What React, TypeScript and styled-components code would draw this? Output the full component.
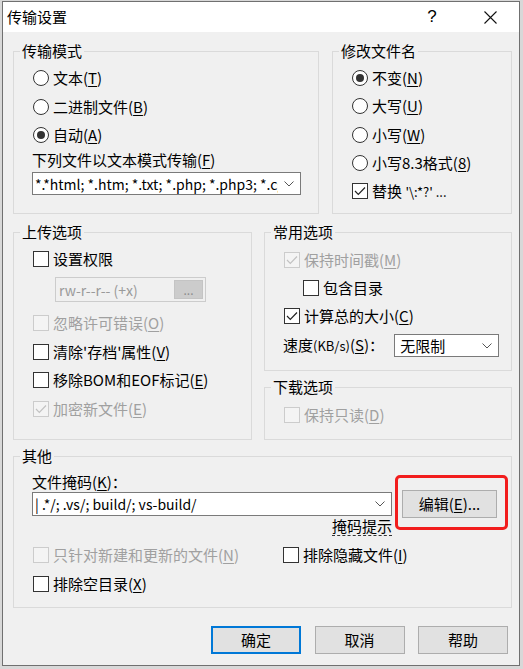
import React from "react";
import styled, { createGlobalStyle } from "styled-components";

const GlobalStyle = createGlobalStyle`
  html, body { margin: 0; padding: 0; }
  body {
    background: #d8d8d8;
    font-family: "Noto Sans CJK SC", "Noto Sans", sans-serif;
    font-size: 15px;
    color: #000;
  }
  * { box-sizing: border-box; }
`;

const Desktop = styled.div`
  width: 523px;
  height: 669px;
  padding: 1px 0 0 2px;
  overflow: hidden;
  background: #d8d8d8;
`;

const Window = styled.div`
  width: 518px;
  height: 665px;
  border: 1px solid #707070;
  background: #f0f0f0;
  display: flex;
  flex-direction: column;
`;

const TitleBar = styled.div`
  height: 30px;
  flex: none;
  background: #fff;
  display: flex;
  align-items: center;
  padding: 0 6px 0 4px;
`;

const Title = styled.div`
  flex: 1;
  font-size: 15px;
  line-height: 20px;
`;

const TitleButton = styled.div<{ $w: number }>`
  width: ${(p) => p.$w}px;
  height: 30px;
  display: flex;
  align-items: center;
  justify-content: center;
  font-family: "Liberation Sans", sans-serif;
  font-size: 17px;
`;

const Spacer = styled.div<{ $w: number }>`
  width: ${(p) => p.$w}px;
`;

const Body = styled.div`
  flex: 1;
  display: flex;
  flex-direction: column;
  padding: 9px 7px 11px 10px;
`;

const Row = styled.div<{ $h: number; $mt: number; $gap: number }>`
  display: flex;
  height: ${(p) => p.$h}px;
  margin-top: ${(p) => p.$mt}px;
  gap: ${(p) => p.$gap}px;
`;

const Column = styled.div<{ $w: number; $gap: number }>`
  display: flex;
  flex-direction: column;
  width: ${(p) => p.$w}px;
  gap: ${(p) => p.$gap}px;
`;

const Group = styled.fieldset<{ $w?: number; $h: number }>`
  margin: 0;
  padding: 0;
  min-width: 0;
  width: ${(p) => (p.$w ? `${p.$w}px` : "100%")};
  height: ${(p) => p.$h}px;
  border: 1px solid #dadada;
  flex: none;
`;

const Legend = styled.legend`
  margin-left: 6px;
  padding: 0 2px;
  line-height: 20px;
  font-size: 15px;
`;

const GroupBody = styled.div<{ $pt: number; $pl?: number }>`
  display: flex;
  flex-direction: column;
  align-items: flex-start;
  padding: ${(p) => p.$pt}px 0 0 ${(p) => p.$pl ?? 18}px;
`;

const Option = styled.div<{ $h: number; $indent?: number; $disabled?: boolean }>`
  display: flex;
  align-items: center;
  gap: 4px;
  height: ${(p) => p.$h}px;
  padding-left: ${(p) => 1 + (p.$indent ?? 0)}px;
  color: ${(p) => (p.$disabled ? "#a0a0a0" : "#000")};
  white-space: nowrap;
  line-height: 20px;
`;

const RadioCircle = styled.span<{ $on?: boolean }>`
  width: 16px;
  height: 16px;
  flex: none;
  border-radius: 50%;
  border: 1px solid #333;
  background: #fff;
  display: flex;
  align-items: center;
  justify-content: center;
  &::after {
    content: "";
    width: 8px;
    height: 8px;
    border-radius: 50%;
    background: #333;
    display: ${(p) => (p.$on ? "block" : "none")};
  }
`;

const CheckBox = styled.span<{ $disabled?: boolean }>`
  width: 16px;
  height: 16px;
  flex: none;
  border: 1px solid ${(p) => (p.$disabled ? "#cccccc" : "#333")};
  background: ${(p) => (p.$disabled ? "#f4f4f4" : "#fff")};
  display: flex;
  align-items: center;
  justify-content: center;
`;

const U = styled.span`
  text-decoration: underline;
  text-underline-offset: 2px;
`;

const Small = styled.span`
  font-size: 13px;
`;

const PlainLabel = styled.div<{ $h: number }>`
  height: ${(p) => p.$h}px;
  line-height: ${(p) => p.$h}px;
  white-space: nowrap;
`;

const Combo = styled.div<{ $w: number; $h: number; $mt?: number; $ml?: number }>`
  width: ${(p) => p.$w}px;
  height: ${(p) => p.$h}px;
  margin-top: ${(p) => p.$mt ?? 0}px;
  margin-left: ${(p) => p.$ml ?? 0}px;
  background: #fff;
  border: 1px solid #7a7a7a;
  display: flex;
  align-items: center;
  padding-left: 2px;
  flex: none;
`;

const ComboText = styled.span<{ $size?: number }>`
  flex: 1;
  overflow: hidden;
  white-space: nowrap;
  font-size: ${(p) => p.$size ?? 14}px;
  line-height: 20px;
`;

const ChevronBox = styled.span`
  width: 22px;
  display: flex;
  justify-content: center;
  flex: none;
`;

const PermBox = styled.div`
  margin: 4px 0 0 23px;
  width: 151px;
  height: 25px;
  border: 1px solid #cccccc;
  display: flex;
  align-items: center;
  justify-content: space-between;
  padding: 0 2px 0 3px;
  color: #9a9a9a;
  font-size: 14px;
`;

const PermButton = styled.span`
  width: 29px;
  height: 19px;
  background: #cccccc;
  border: 1px solid #c4c4c4;
  color: #8c8c8c;
  font-size: 12px;
  display: flex;
  align-items: center;
  justify-content: center;
`;

const SpeedRow = styled.div`
  display: flex;
  align-items: center;
  height: 31px;
`;

const SpeedLabel = styled.div`
  width: 111px;
  white-space: nowrap;
  line-height: 20px;
`;

const MaskGrid = styled.div`
  display: grid;
  grid-template-columns: 360px 95px;
  grid-template-rows: 28px 18px;
  column-gap: 10px;
  align-items: center;
  margin-top: -2px;
`;

const EditWrap = styled.div`
  position: relative;
  height: 28px;
`;

const Highlight = styled.div`
  position: absolute;
  left: -7px;
  top: -15px;
  width: 113px;
  height: 55px;
  border: 3px solid #f21d1d;
  border-radius: 5px;
  pointer-events: none;
`;

const Hint = styled.span`
  justify-self: end;
  align-self: start;
  line-height: 16px;
  height: 18px;
  border-bottom: 1px dashed #333;
  white-space: nowrap;
`;

const CheckGrid = styled.div`
  display: grid;
  grid-template-columns: 250px 1fr;
  grid-auto-rows: 29px;
  margin-top: 4.5px;
`;

const ButtonRow = styled.div`
  display: flex;
  justify-content: flex-end;
  gap: 13.5px;
  margin-top: 18px;
  padding-right: 4px;
`;

const Button = styled.button<{ $w: number; $primary?: boolean }>`
  width: ${(p) => p.$w}px;
  height: 28px;
  padding: 0;
  background: #e1e1e1;
  border: ${(p) => (p.$primary ? "2px solid #0078d7" : "1px solid #adadad")};
  font-family: inherit;
  font-size: 15px;
  color: #000;
  display: flex;
  align-items: center;
  justify-content: center;
  line-height: 20px;
`;

const Check = ({ color = "#222" }: { color?: string }) => (
  <svg width="14" height="14" viewBox="0 0 14 14">
    <polyline points="2,7 5.3,10.3 12,3.5" fill="none" stroke={color} strokeWidth="1.2" />
  </svg>
);

const Chevron = () => (
  <svg width="10" height="6" viewBox="0 0 10 6">
    <polyline points="0.5,0.5 5,5 9.5,0.5" fill="none" stroke="#555" strokeWidth="1" />
  </svg>
);

type CBProps = {
  h: number;
  checked?: boolean;
  disabled?: boolean;
  indent?: number;
  children: React.ReactNode;
};

const CheckOption = ({ h, checked, disabled, indent, children }: CBProps) => (
  <Option $h={h} $indent={indent} $disabled={disabled}>
    <CheckBox $disabled={disabled}>{checked && <Check color={disabled ? "#c2c2c2" : "#222"} />}</CheckBox>
    <span>{children}</span>
  </Option>
);

const RadioOption = ({ h, on, children }: { h: number; on?: boolean; children: React.ReactNode }) => (
  <Option $h={h}>
    <RadioCircle $on={on} />
    <span>{children}</span>
  </Option>
);

export default function App() {
  return (
    <>
      <GlobalStyle />
      <Desktop>
        <Window>
          <TitleBar>
            <Title>传输设置</Title>
            <TitleButton $w={30}>?</TitleButton>
            <Spacer $w={20} />
            <TitleButton $w={46}>
              <svg width="13" height="13" viewBox="0 0 13 13">
                <path d="M0.5 0.5 L12.5 12.5 M12.5 0.5 L0.5 12.5" stroke="#111" strokeWidth="1.1" />
              </svg>
            </TitleButton>
          </TitleBar>
          <Body>
            <Row $h={173} $mt={0} $gap={13}>
              <Group $w={306} $h={173}>
                <Legend>传输模式</Legend>
                <GroupBody $pt={3}>
                  <RadioOption h={28.5}>
                    文本(<U>T</U>)
                  </RadioOption>
                  <RadioOption h={28.5}>
                    二进制文件(<U>B</U>)
                  </RadioOption>
                  <RadioOption h={28.5} on>
                    自动(<U>A</U>)
                  </RadioOption>
                  <PlainLabel $h={20}>
                    下列文件以文本模式传输(<U>F</U>)
                  </PlainLabel>
                  <Combo $w={269} $h={23} $mt={2.5}>
                    <ComboText>*.*html; *.htm; *.txt; *.php; *.php3; *.cgi; *.c; *.cpp</ComboText>
                    <ChevronBox>
                      <Chevron />
                    </ChevronBox>
                  </Combo>
                </GroupBody>
              </Group>
              <Group $w={180} $h={173}>
                <Legend>修改文件名</Legend>
                <GroupBody $pt={3}>
                  <RadioOption h={28.3} on>
                    不变(<U>N</U>)
                  </RadioOption>
                  <RadioOption h={28.3}>
                    大写(<U>U</U>)
                  </RadioOption>
                  <RadioOption h={28.3}>
                    小写(<U>W</U>)
                  </RadioOption>
                  <RadioOption h={28.3}>
                    小写8.3格式(<U>8</U>)
                  </RadioOption>
                  <CheckOption h={28.3} checked>
                    替换 <Small>'\:*?' ...</Small>
                  </CheckOption>
                </GroupBody>
              </Group>
            </Row>

            <Row $h={218} $mt={8} $gap={12}>
              <Group $w={239} $h={218}>
                <Legend>上传选项</Legend>
                <GroupBody $pt={3}>
                  <CheckOption h={28}>设置权限</CheckOption>
                  <PermBox>
                    <span>rw-r--r-- (+x)</span>
                    <PermButton>...</PermButton>
                  </PermBox>
                  <Spacer $w={0} style={{ height: 6.65 }} />
                  <CheckOption h={28.7} disabled>
                    忽略许可错误(<U>O</U>)
                  </CheckOption>
                  <CheckOption h={28.7}>
                    清除'存档'属性(<U>V</U>)
                  </CheckOption>
                  <CheckOption h={28.7}>
                    移除BOM和EOF标记(<U>E</U>)
                  </CheckOption>
                  <CheckOption h={28.7} checked disabled>
                    加密新文件(<U>E</U>)
                  </CheckOption>
                </GroupBody>
              </Group>
              <Column $w={248} $gap={6}>
                <Group $w={248} $h={149}>
                  <Legend>常用选项</Legend>
                  <GroupBody $pt={4}>
                    <CheckOption h={28} checked disabled>
                      保持时间戳(<U>M</U>)
                    </CheckOption>
                    <CheckOption h={28} indent={19}>
                      包含目录
                    </CheckOption>
                    <CheckOption h={28} checked>
                      计算总的大小(<U>C</U>)
                    </CheckOption>
                    <SpeedRow>
                      <SpeedLabel>
                        速度<Small>(KB/s)</Small>(<U>S</U>)：
                      </SpeedLabel>
                      <Combo $w={105} $h={23}>
                        <ComboText $size={15}>&nbsp;无限制</ComboText>
                        <ChevronBox>
                          <Chevron />
                        </ChevronBox>
                      </Combo>
                    </SpeedRow>
                  </GroupBody>
                </Group>
                <Group $w={248} $h={63}>
                  <Legend>下载选项</Legend>
                  <GroupBody $pt={4}>
                    <CheckOption h={28} disabled>
                      保持只读(<U>D</U>)
                    </CheckOption>
                  </GroupBody>
                </Group>
              </Column>
            </Row>

            <Row $h={162} $mt={6} $gap={0}>
              <Group $h={162}>
                <Legend>其他</Legend>
                <GroupBody $pt={6}>
                  <PlainLabel $h={20}>
                    文件掩码(<U>K</U>)：
                  </PlainLabel>
                  <MaskGrid>
                    <Combo $w={360} $h={24}>
                      <ComboText>| .*/; .vs/; build/; vs-build/</ComboText>
                      <ChevronBox>
                        <Chevron />
                      </ChevronBox>
                    </Combo>
                    <EditWrap>
                      <Button $w={95}>
                        编辑(<U>E</U>)...
                      </Button>
                      <Highlight />
                    </EditWrap>
                    <Hint>掩码提示</Hint>
                  </MaskGrid>
                  <CheckGrid>
                    <CheckOption h={29} disabled>
                      只针对新建和更新的文件(<U>N</U>)
                    </CheckOption>
                    <CheckOption h={29}>
                      排除隐藏文件(<U>I</U>)
                    </CheckOption>
                    <CheckOption h={29}>
                      排除空目录(<U>X</U>)
                    </CheckOption>
                  </CheckGrid>
                </GroupBody>
              </Group>
            </Row>

            <ButtonRow>
              <Button $w={90} $primary>
                确定
              </Button>
              <Button $w={90}>取消</Button>
              <Button $w={90}>帮助</Button>
            </ButtonRow>
          </Body>
        </Window>
      </Desktop>
    </>
  );
}
